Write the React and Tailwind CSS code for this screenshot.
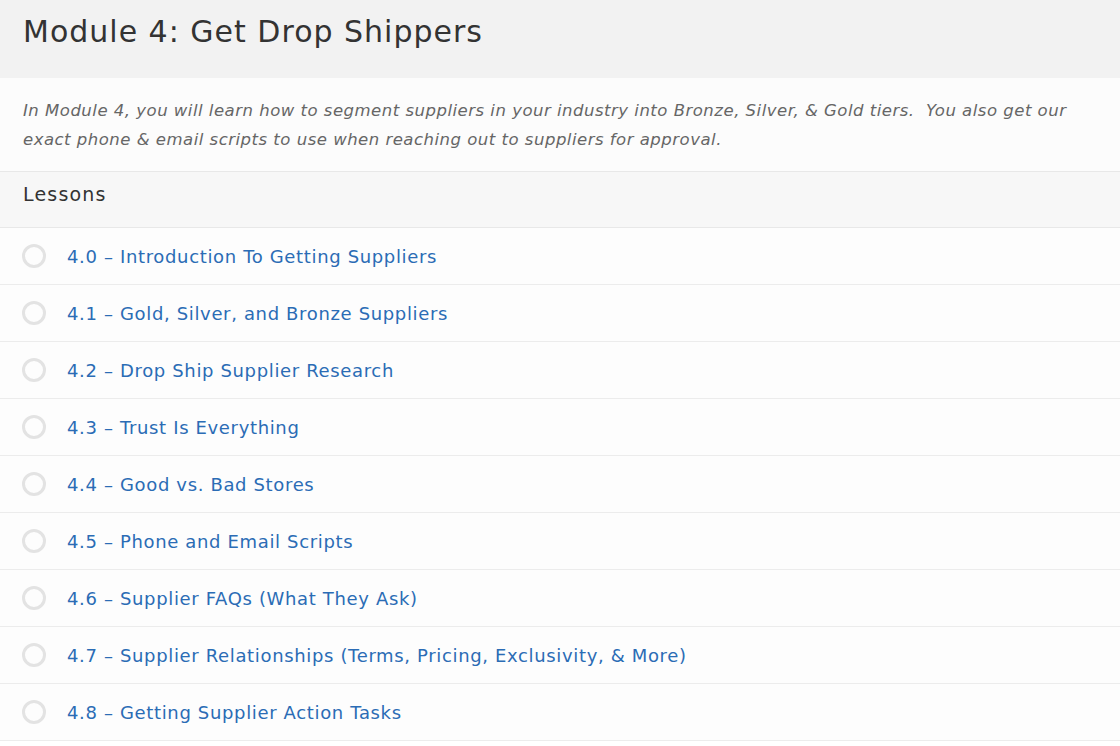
const lessons = [
  "4.0 – Introduction To Getting Suppliers",
  "4.1 – Gold, Silver, and Bronze Suppliers",
  "4.2 – Drop Ship Supplier Research",
  "4.3 – Trust Is Everything",
  "4.4 – Good vs. Bad Stores",
  "4.5 – Phone and Email Scripts",
  "4.6 – Supplier FAQs (What They Ask)",
  "4.7 – Supplier Relationships (Terms, Pricing, Exclusivity, & More)",
  "4.8 – Getting Supplier Action Tasks",
];

const App = () => {
  return (
    <div className="w-[1120px] min-h-[746px] bg-white font-['DejaVu_Sans',sans-serif]">
      <div className="h-[78px] bg-[#f2f2f2] px-[23px] pt-[12px]">
        <h1 className="text-[30px] leading-[40px] tracking-[1px] text-[#333]">Module 4: Get Drop Shippers</h1>
      </div>

      <div className="h-[94px] bg-[#fcfcfc] px-[23px] pt-[18px] border-b border-[#e8e8e8]">
        <p className="italic text-[16.5px] leading-[29px] tracking-[0.5px] text-[#666]">
          In Module 4, you will learn how to segment suppliers in your industry into Bronze, Silver, &amp; Gold tiers.&nbsp; You also get our exact phone &amp; email scripts to use when reaching out to suppliers for approval.
        </p>
      </div>

      <div className="h-[56px] bg-[#f7f7f7] px-[23px] pt-[8px] border-b border-[#e8e8e8]">
        <h3 className="text-[19px] leading-[28px] tracking-[1.2px] text-[#333]">Lessons</h3>
      </div>

      <ul>
        {lessons.map((l) => (
          <li
            key={l}
            className="h-[57px] flex items-center px-[22px] bg-[#fdfdfd] border-b border-[#ececec]"
          >
            <span className="w-[24px] h-[24px] rounded-full border-[3px] border-[#e3e3e3] shrink-0" />
            <a className="ml-[21px] text-[18px] tracking-[0.65px] text-[#2b6cb5]">{l}</a>
          </li>
        ))}
      </ul>
    </div>
  );
};

export default App;
